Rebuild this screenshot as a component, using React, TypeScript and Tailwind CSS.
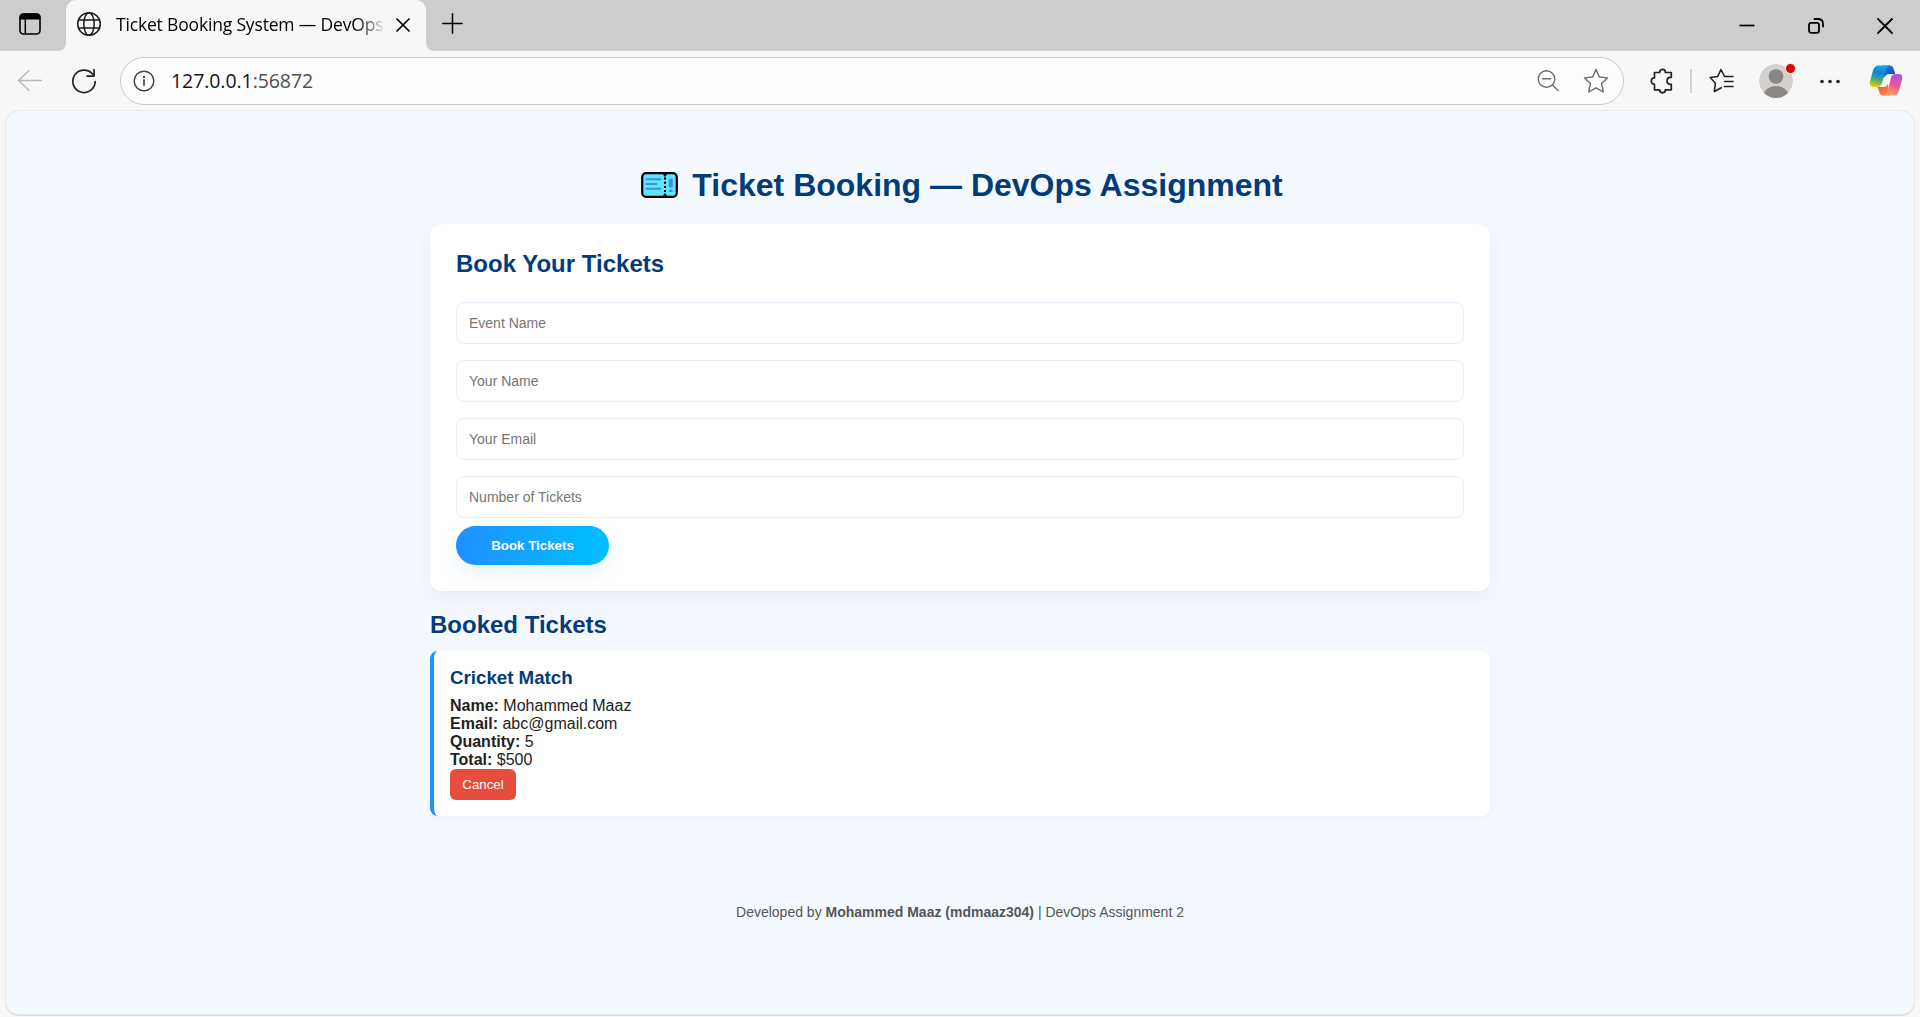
import React from "react";

const stroke = { fill: "none", stroke: "currentColor", strokeLinecap: "round", strokeLinejoin: "round" } as const;

function Globe() {
  return (
    <svg width="26" height="26" viewBox="0 0 26 26" {...stroke} strokeWidth="1.5" className="shrink-0 text-[#1b1b1b]">
      <circle cx="13" cy="13" r="11.3" />
      <ellipse cx="13" cy="13" rx="5.2" ry="11.3" />
      <path d="M2.5 9h21M2.5 17h21" />
    </svg>
  );
}

function TabBar() {
  return (
    <div className="flex h-[51px] bg-[#cdcdcd] text-black">
      <div className="flex w-[66px] items-center pl-[19px]">
        <svg width="22" height="22" viewBox="0 0 22 22" className="-mt-[3px]">
          <rect x="1" y="1" width="20" height="20" rx="3.5" fill="none" stroke="#000" strokeWidth="1.6" />
          <path d="M.5 6.500V4Q.5.500 4 .5h14q3.500 0 3.500 3.500v2.500z" />
          <path d="M6.300 6v15" stroke="#000" strokeWidth="1.500" />
        </svg>
      </div>
      <div className="relative flex w-[360px] items-center rounded-t-[10px] bg-[#f7f7f7] pl-[10px]">
        <svg className="absolute -left-[9px] bottom-0" width="9" height="9"><path d="M9 0v9H0Q9 9 9 0" fill="#f7f7f7" /></svg>
        <svg className="absolute -right-[9px] bottom-0" width="9" height="9"><path d="M0 0v9h9Q0 9 0 0" fill="#f7f7f7" /></svg>
        <div className="-mt-[3px] flex items-center">
          <Globe />
          <div className="ml-[14px] w-[268px] overflow-hidden whitespace-nowrap bg-gradient-to-r from-black from-88% to-[#e8e8e8] bg-clip-text font-['Open_Sans',sans-serif] text-[17.500px] leading-6 tracking-[-0.170px] text-transparent">
            Ticket Booking System — DevOps
          </div>
          <svg width="14" height="14" viewBox="0 0 14 14" {...stroke} strokeWidth="1.7" className="ml-[12px] mt-px"><path d="M1 1l12 12M13 1L1 13" /></svg>
        </div>
      </div>
      <div className="flex items-center pl-[16px]">
        <svg width="21" height="21" viewBox="0 0 21 21" {...stroke} strokeWidth="1.500" className="-mt-[4px]"><path d="M10.500.8v19.400M.8 10.500h19.400" /></svg>
      </div>
      <div className="ml-auto flex items-center pr-[27px]">
        <svg width="16" height="16" viewBox="0 0 16 16" className="mr-[53px]"><path d="M.5 7.500h15" stroke="#000" strokeWidth="1.700" /></svg>
        <svg width="16" height="16" viewBox="0 0 16 16" {...stroke} strokeWidth="1.800" className="mr-[53px]">
          <rect x="1" y="4.800" width="10" height="10" rx="2" />
          <path d="M6.500 1h3.500Q15 1 15 6V8.500" />
        </svg>
        <svg width="16" height="16" viewBox="0 0 16 16" {...stroke} strokeWidth="1.800"><path d="M1 1l14 14M15 1L1 15" /></svg>
      </div>
    </div>
  );
}

function Copilot() {
  return (
    <svg width="34" height="31" viewBox="0 0 34 31">
      <defs>
        <linearGradient id="cpl" x1="0.500" y1="0" x2="0.300" y2="1">
          <stop offset="0" stopColor="#12a0ee" /><stop offset=".35" stopColor="#1680d8" />
          <stop offset=".65" stopColor="#3fae78" /><stop offset="1" stopColor="#f8cf08" />
        </linearGradient>
        <linearGradient id="cpr" x1="0.700" y1="0" x2="0.400" y2="1">
          <stop offset="0" stopColor="#a94ff0" /><stop offset=".5" stopColor="#ea5592" /><stop offset="1" stopColor="#ffa557" />
        </linearGradient>
        <linearGradient id="cpt" x1="0" y1="0" x2="1" y2="1">
          <stop offset="0" stopColor="#1389e0" /><stop offset="1" stopColor="#1836c4" />
        </linearGradient>
        <linearGradient id="cpb" x1="0" y1="0" x2="1" y2="1">
          <stop offset="0" stopColor="#f0502c" /><stop offset="1" stopColor="#fb8a4d" />
        </linearGradient>
      </defs>
      <path d="M14 .5h6.500q3 0 4 3l1.700 5.500H20q-3 0-5 4z" fill="url(#cpt)" />
      <path d="M8.500 22H15q3 0 4-4l1 12.500h-5.500q-3 0-4-3z" fill="url(#cpb)" />
      <path d="M9.500.5H20.500q-2.500.5-3.500 4l-4 13.500q-1 4-5 4H4.500Q0 22 .8 17L4 5.500Q5.500.5 9.500 .5z" fill="url(#cpl)" />
      <path d="M24.500 30.500H15q2.500-.5 3.500-4L22 13q1-4 4.500-4H29.500Q34 9 33.200 14L30 25.500q-1.500 5-5.500 5z" fill="url(#cpr)" />
    </svg>
  );
}

function Toolbar() {
  return (
    <div className="flex h-[59px] items-center bg-[#f7f7f7] pl-[17px] text-[#222]">
      <svg width="26" height="24" viewBox="0 0 26 24" {...stroke} strokeWidth="1.400" className="text-[#b8b8b8]"><path d="M24.500 11.500H1.500M12 1.500L1.500 11.500 12 21.500" /></svg>
      <svg width="26" height="26" viewBox="0 0 26 26" {...stroke} strokeWidth="1.700" className="ml-[28px]">
        <path d="M24.200 13.500A11.200 11.200 0 1 1 21.500 6M23 1.500v6.600h-6.900" />
      </svg>
      <div className="ml-[23px] flex h-[48px] w-[1504px] items-center rounded-full border border-[#cbcbcb] bg-[#fdfdfd] pl-[12px] pr-[14px]">
        <svg width="22" height="22" viewBox="0 0 22 22" {...stroke} strokeWidth="1.400" className="text-[#3f3f3f]">
          <circle cx="11" cy="11" r="9.800" /><path d="M11 10v5" strokeWidth="1.700" /><circle cx="11" cy="7" r=".5" />
        </svg>
        <span className="ml-[16px] mt-px font-['Open_Sans',sans-serif] text-[19.500px] leading-none tracking-[-0.070px] text-[#171717]">127.0.0.1<span className="text-[#4e4e4e]">:56872</span></span>
        <svg width="22" height="22" viewBox="0 0 22 22" {...stroke} strokeWidth="1.400" className="ml-auto text-[#6b6b6b]">
          <circle cx="9.500" cy="9" r="8.300" /><path d="M5.500 8.800h8M15.500 15l5.500 5.500" />
        </svg>
        <svg width="26" height="26" viewBox="0 0 26 26" {...stroke} strokeWidth="1.400" className="ml-[24px] text-[#6b6b6b]">
          <path d="M13 1.500l3.400 7.500 8.100.9-6 5.500 1.800 8.600L13 19.800 5.700 24l1.800-8.600-6-5.500L9.600 9z" />
        </svg>
      </div>
      <svg width="24" height="26" viewBox="0 0 24 26" {...stroke} strokeWidth="1.700" className="ml-[26px]">
        <path d="M4.500 4.500H9.600C9.600 .3 15.400 .3 15.400 4.500H21.300V9.300H20C16 9.300 16 16.300 20 16.300H21.300V21.800H15.400C15.400 25.800 9.600 25.800 9.600 21.800H4.500V16.300C.2 16.300 .2 9.800 4.500 9.800z" />
      </svg>
      <div className="ml-[16px] h-[24px] w-[2px] bg-[#d2d2d2]" />
      <svg width="25" height="25" viewBox="0 0 25 25" {...stroke} strokeWidth="1.600" className="ml-[17px]">
        <path d="M15.500 8.500L12 1.500 8.700 8.500 1.200 9.500l5.200 5.700L5.300 23.500l7-3.800M15.500 8.500H24M15.500 13.500H24M15.500 18.500H24" />
      </svg>
      <div className="relative ml-[25px]">
        <svg width="34" height="34" viewBox="0 0 34 34">
          <clipPath id="av"><circle cx="17" cy="17" r="17" /></clipPath>
          <g clipPath="url(#av)"><circle cx="17" cy="17" r="17" fill="#d2d0ce" /><circle cx="17" cy="12.500" r="7.300" fill="#8a8683" /><ellipse cx="17" cy="32" rx="12.500" ry="10" fill="#8a8683" /></g>
        </svg>
        <div className="absolute -right-[3px] -top-[1px] size-[11px] rounded-full border border-[#f7f7f7] bg-[#e00000]" />
      </div>
      <svg width="20" height="6" viewBox="0 0 20 6" fill="#222" className="ml-[27px]"><circle cx="2" cy="3.500" r="1.800" /><circle cx="10" cy="3.500" r="1.800" /><circle cx="18" cy="3.500" r="1.800" /></svg>
      <div className="ml-[29px]"><Copilot /></div>
    </div>
  );
}

function TicketIcon() {
  return (
    <svg width="37" height="26" viewBox="0 0 37 26">
      <rect x="1.200" y="1.200" width="34.600" height="23.600" rx="4" fill="#5fe6ff" stroke="#000" strokeWidth="2.200" />
      <path d="M22 1.500h4L24 4.500zM22 24.500h4L24 21.500z" stroke="#000" strokeLinejoin="round" />
      <path d="M24 5.500v15.500" stroke="#000" strokeWidth="2" strokeDasharray="2 2.200" />
      <path d="M5.500 7.300h14M5.500 12h10M5.500 16.700h14" stroke="#3f8ee0" strokeWidth="2" strokeLinecap="round" />
      <rect x="27.800" y="6.500" width="4" height="9" rx="1" fill="#3f8ee0" />
      <rect x="27.800" y="17.800" width="4" height="2.200" rx="1" fill="#3f8ee0" />
    </svg>
  );
}

const fields = ["Event Name", "Your Name", "Your Email", "Number of Tickets"];
const details = [["Name:", "Mohammed Maaz"], ["Email:", "abc@gmail.com"], ["Quantity:", "5"], ["Total:", "$500"]];

export default function App() {
  return (
    <div className="flex h-[1017px] w-[1920px] flex-col overflow-hidden bg-[#f7f7f7] font-['Liberation_Sans',Arial,sans-serif]">
      <TabBar />
      <Toolbar />
      <div className="mx-[5px] h-[905px] rounded-[14px] border border-[#e6e8ea] bg-[#f4f9ff] shadow-[0_1px_1px_#0000001c]">
        <main className="mx-auto flex w-[1060px] flex-col pt-[54px] text-[#222]">
          <h1 className="flex h-[40px] items-center justify-center gap-[14px] pl-[4px] text-[32px] font-bold leading-[40px] text-[#043b78]">
            <TicketIcon />
            <span>Ticket Booking — DevOps Assignment</span>
          </h1>
          <section className="mt-[19px] flex h-[367px] flex-col items-start rounded-[12px] bg-white px-[26px] pt-[26px] shadow-[0_8px_24px_rgba(0,0,0,0.060)]">
            <h2 className="text-[24px] font-bold leading-[28px] text-[#043b78]">Book Your Tickets</h2>
            <div className="mt-[24px] flex w-full flex-col gap-[16px]">
              {fields.map((f) => (
                <input key={f} placeholder={f} className="h-[42px] w-full rounded-[8px] border border-[#e6eef9] bg-white px-[12px] text-[14px] placeholder:text-[#757575]" />
              ))}
            </div>
            <button className="mt-[8px] h-[39px] w-[153px] rounded-full bg-linear-90 from-[#1e90ff] to-[#00bfff] text-[13.333px] font-bold text-white shadow-[0_6px_18px_rgba(30,144,255,0.120)]">Book Tickets</button>
          </section>
          <h2 className="mt-[20px] text-[24px] font-bold leading-[28px] text-[#043b78]">Booked Tickets</h2>
          <article className="mt-[12px] h-[165px] rounded-[8px] border-l-[4px] border-[#1e90ff] bg-white pl-[16px] pt-[16px] shadow-[0_4px_12px_rgba(0,0,0,0.030)]">
            <h3 className="mb-[9px] text-[18.720px] font-bold leading-[21px] text-[#043b78]">Cricket Match</h3>
            {details.map(([k, v]) => (
              <p key={k} className="text-[16px] leading-[18px]"><b>{k}</b> {v}</p>
            ))}
            <button className="block h-[31px] w-[66px] rounded-[6px] bg-[#e74c3c] text-[13.333px] text-white">Cancel</button>
          </article>
          <footer className="mt-[88px] text-center text-[14px] leading-[16px] text-[#555]">
            Developed by <b>Mohammed Maaz (mdmaaz304)</b> | DevOps Assignment 2
          </footer>
        </main>
      </div>
    </div>
  );
}
